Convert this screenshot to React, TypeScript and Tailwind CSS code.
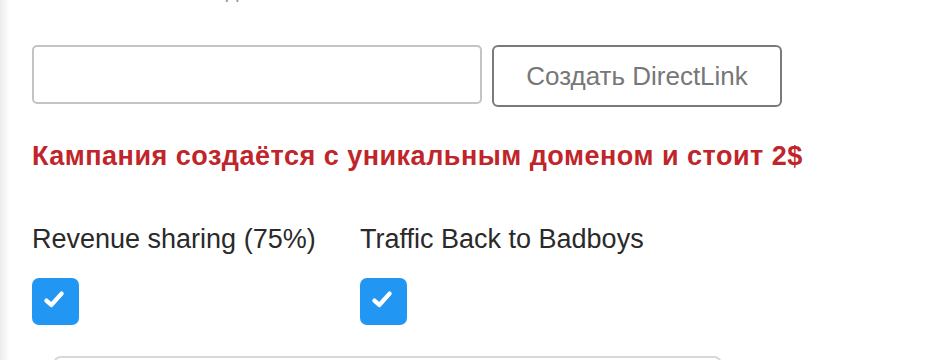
import React, { useState } from 'react';

export default function App() {
  const [url, setUrl] = useState('');
  const [revenue, setRevenue] = useState(true);
  const [trafficBack, setTrafficBack] = useState(true);

  return (
    <div className="flex h-[360px] w-[925px] overflow-hidden bg-white font-['Liberation_Sans',Arial,sans-serif]">
      {/* page edge */}
      <div className="w-[10px] shrink-0 bg-gradient-to-r from-[#ececec] to-white" />

      <div className="flex-1 pl-[22px]">
        {/* previous line, cut off by the viewport */}
        <div className="h-[45px] overflow-hidden">
          <div className="-mt-[24px] pl-[143px] text-[22px] leading-[28px] text-[#999]">
            Ваш домен
          </div>
        </div>

        <div className="flex items-start gap-[10px]">
          <input
            type="text"
            value={url}
            onChange={(e) => setUrl(e.target.value)}
            className="h-[59px] w-[450px] rounded-[5px] border-2 border-[#c4c4c4] px-3 text-[22px] outline-none"
          />
          <button className="h-[62px] w-[290px] rounded-[6px] border-2 border-[#7a7a7a] text-[26px] text-[#777]">
            Создать DirectLink
          </button>
        </div>

        <div className="mt-[34px] whitespace-nowrap text-[27px] font-bold leading-[31px] tracking-[0.5px] text-[#bf252a]">
          Кампания создаётся с уникальным доменом и стоит 2$
        </div>

        <div className="mt-[51px] flex gap-[46px] whitespace-nowrap text-[27px] leading-[32px] text-[#2a2a2a]">
          <label className="flex w-[282px] flex-col gap-[23px]">
            <span>Revenue sharing (75%)</span>
            <Checkbox checked={revenue} onChange={() => setRevenue(!revenue)} />
          </label>
          <label className="flex flex-col gap-[23px]">
            <span>Traffic Back to Badboys</span>
            <Checkbox checked={trafficBack} onChange={() => setTrafficBack(!trafficBack)} />
          </label>
        </div>

        {/* next block, cut off */}
        <div className="ml-[21px] mt-[31px] h-[40px] w-[669px] rounded-[8px] border-2 border-[#d8d8d8]" />
      </div>
    </div>
  );
}

function Checkbox({ checked, onChange }: { checked: boolean; onChange: () => void }) {
  return (
    <button
      type="button"
      onClick={onChange}
      className="flex h-[47px] w-[47px] items-center justify-center rounded-[7px] bg-[#2196f3]"
    >
      {checked && (
        <svg width="26" height="26" viewBox="0 0 24 24" className="-mt-[6px] -ml-[3px] shrink-0">
          <path
            d="M5 13.5 L9.5 17.5 L19 7"
            fill="none"
            stroke="#fff"
            strokeWidth="4"
            strokeLinecap="round"
            strokeLinejoin="round"
          />
        </svg>
      )}
    </button>
  );
}
